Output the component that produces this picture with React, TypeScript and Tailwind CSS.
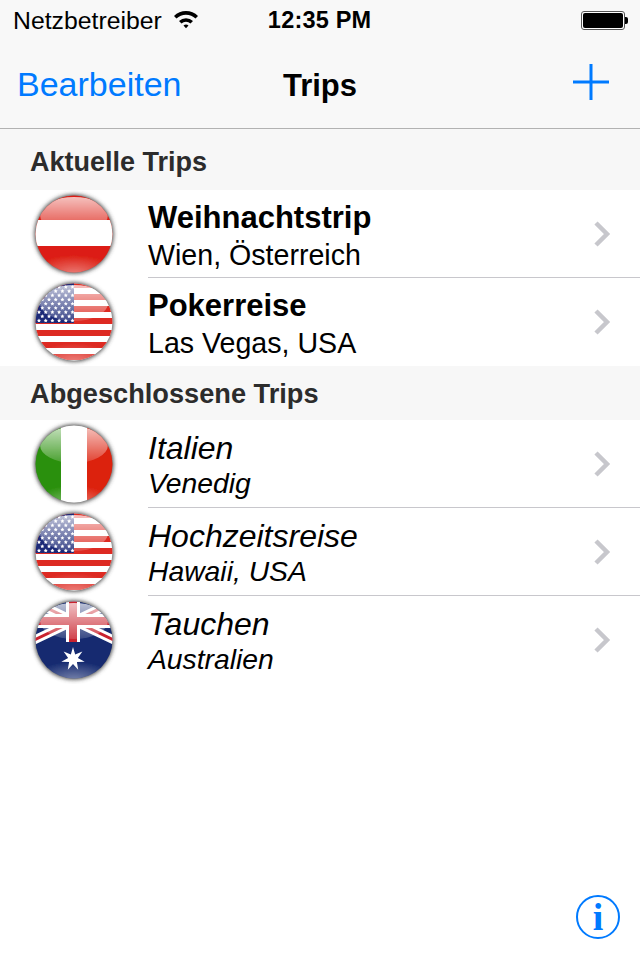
import React from "react";

const STAR = "M0,-1 L.29,-.4 L.95,-.31 L.47,.15 L.59,.81 L0,.5 L-.59,.81 L-.47,.15 L-.95,-.31 L-.29,-.4 Z";

function sevenStar(cx: number, cy: number, R: number, r: number) {
  const pts: string[] = [];
  for (let i = 0; i < 14; i++) {
    const a = (Math.PI * i) / 7 - Math.PI / 2;
    const rad = i % 2 ? r : R;
    pts.push(`${(cx + rad * Math.cos(a)).toFixed(2)},${(cy + rad * Math.sin(a)).toFixed(2)}`);
  }
  return pts.join(" ");
}

function Art({ kind }: { kind: string }) {
  if (kind === "at")
    return (
      <>
        <rect x="0" y="0" width="88" height="88" fill="#dc1f14" />
        <rect x="0" y="30" width="88" height="26" fill="#ffffff" />
      </>
    );
  if (kind === "it")
    return (
      <>
        <rect x="0" y="0" width="31" height="88" fill="#2a900c" />
        <rect x="31" y="0" width="26" height="88" fill="#ffffff" />
        <rect x="57" y="0" width="31" height="88" fill="#dc200c" />
      </>
    );
  if (kind === "us") {
    const stripes = [4, 16, 28, 40, 52, 64, 76];
    const stars: [number, number][] = [];
    for (let r = 0; r < 5; r++)
      for (let c = 0; c < 6; c++) stars.push([9 + c * 6.7, 9 + r * 8.4]);
    for (let r = 0; r < 4; r++)
      for (let c = 0; c < 5; c++) stars.push([12.3 + c * 6.7, 13.2 + r * 8.4]);
    return (
      <>
        <rect x="0" y="0" width="88" height="88" fill="#ffffff" />
        {stripes.map((y) => (
          <rect key={y} x="0" y={y} width="88" height="6" fill="#dd2a22" />
        ))}
        <rect x="0" y="0" width="44" height="45" fill="#1d2a78" />
        {stars.map(([x, y], i) => (
          <path key={i} d={STAR} transform={`translate(${x},${y}) scale(2.1)`} fill="#ffffff" />
        ))}
      </>
    );
  }
  return (
    <>
      <rect x="0" y="0" width="88" height="88" fill="#14296f" />
      <path d="M0,4 L88,46 M88,4 L0,46" stroke="#ffffff" strokeWidth="9" />
      <path d="M0,4 L88,46 M88,4 L0,46" stroke="#c9232e" strokeWidth="3" />
      <rect x="0" y="18" width="88" height="14" fill="#ffffff" />
      <rect x="36" y="0" width="14" height="46" fill="#ffffff" />
      <rect x="0" y="21" width="88" height="8" fill="#c9232e" />
      <rect x="39" y="0" width="8" height="46" fill="#c9232e" />
      <polygon points={sevenStar(43, 63, 12, 5)} fill="#ffffff" />
    </>
  );
}

function Flag({ kind, id }: { kind: string; id: string }) {
  return (
    <svg width="88" height="88" viewBox="0 0 88 88" className="block shrink-0">
      <defs>
        <clipPath id={`c-${id}`}>
          <circle cx="44" cy="44" r="38.5" />
        </clipPath>
        <linearGradient id={`g-${id}`} x1="0" y1="0" x2="0" y2="1">
          <stop offset="0" stopColor="#fff" stopOpacity="0.72" />
          <stop offset="1" stopColor="#fff" stopOpacity="0.15" />
        </linearGradient>
        <radialGradient id={`b-${id}`} cx="0.5" cy="1" r="0.55">
          <stop offset="0" stopColor="#fff" stopOpacity="0.42" />
          <stop offset="1" stopColor="#fff" stopOpacity="0" />
        </radialGradient>
        <filter id={`s-${id}`} x="-20%" y="-20%" width="140%" height="140%">
          <feGaussianBlur stdDeviation="2.1" />
        </filter>
        <filter id={`f-${id}`} x="-5%" y="-5%" width="110%" height="110%">
          <feGaussianBlur stdDeviation="0.45" />
        </filter>
      </defs>
      <circle cx="44" cy="44" r="39.5" fill="#444" filter={`url(#s-${id})`} />
      <g filter={`url(#f-${id})`}>
        <g clipPath={`url(#c-${id})`}>
          <Art kind={kind} />
          <rect x="5" y="50" width="78" height="34" fill={`url(#b-${id})`} />
          <ellipse cx="44" cy="25" rx="34" ry="18" fill={`url(#g-${id})`} />
        </g>
      </g>
    </svg>
  );
}

function Chevron() {
  return (
    <svg width="18" height="28" viewBox="0 0 18 28" className="shrink-0">
      <path d="M3 3 L14 14 L3 25" fill="none" stroke="#c7c7cc" strokeWidth="4.5" />
    </svg>
  );
}

function Row({
  kind,
  id,
  title,
  sub,
  done,
  last,
}: {
  kind: string;
  id: string;
  title: string;
  sub: string;
  done?: boolean;
  last?: boolean;
}) {
  return (
    <div className="flex h-[88px] bg-white">
      <div className="w-[148px] shrink-0 pl-[30px] flex items-center">
        <Flag kind={kind} id={id} />
      </div>
      <div
        className={`flex-1 flex items-center justify-between pr-[29px] ${
          last ? "" : "border-b border-[#c8c7cc]"
        }`}
      >
        {done ? (
          <div className="italic text-black pt-[1px]">
            <div className="text-[32px] leading-[37px]">{title}</div>
            <div className="text-[28.3px] leading-[32px]">{sub}</div>
          </div>
        ) : (
          <div className="text-black pt-[4px]">
            <div className="text-[31px] leading-[38px] font-bold">{title}</div>
            <div className="text-[28.6px] leading-[36px]">{sub}</div>
          </div>
        )}
        <Chevron />
      </div>
    </div>
  );
}

export default function App() {
  return (
    <div className="w-[640px] h-[960px] flex flex-col bg-white font-['Liberation_Sans',Arial,sans-serif] overflow-hidden">
      <header className="h-[129px] shrink-0 bg-[#f8f8f8] border-b border-[#b2b2b2] flex flex-col">
        <div className="h-[41px] flex items-center relative text-black">
          <span className="ml-[13px] text-[24.8px] leading-none pt-[1px]">Netzbetreiber</span>
          <svg width="26" height="20" viewBox="0 0 26 20" className="ml-[11px] mb-[4px]">
            <path
              d="M1 7 A17 17 0 0 1 25 7 L22.5 9.6 A13.5 13.5 0 0 0 3.5 9.6 Z M6 12 A10 10 0 0 1 20 12 L17.5 14.5 A6.5 6.5 0 0 0 8.5 14.5 Z M10.5 16.6 A4 4 0 0 1 15.5 16.6 L13 19.2 Z"
              fill="#000"
            />
          </svg>
          <span className="ml-[69px] text-[23.5px] leading-none font-bold tracking-[0.2px] pt-[1px]">12:35 PM</span>
          <div className="ml-auto mr-[12px] flex items-center">
            <div className="w-[44px] h-[19px] rounded-[3px] border border-[#555] p-[1px] bg-white">
              <div className="w-full h-full rounded-[2px] bg-black" />
            </div>
            <div className="w-[3px] h-[7px] rounded-r-[2px] bg-black" />
          </div>
        </div>
        <div className="flex-1 grid grid-cols-[1fr_auto_1fr] items-center">
          <div className="pl-[17px] pt-[1px]">
            <span className="text-[34px] leading-none text-[#007aff]">Bearbeiten</span>
          </div>
          <span className="text-[31px] leading-none font-bold text-black pt-[1px]">Trips</span>
          <div className="flex justify-end pr-[31px] pb-[6px]">
            <svg width="36" height="36" viewBox="0 0 36 36">
              <path d="M0 18 H36 M18 0 V36" stroke="#007aff" strokeWidth="3" />
            </svg>
          </div>
        </div>
      </header>

      <div className="h-[61px] shrink-0 bg-[#f7f7f7] pl-[30px] pt-[5px] flex items-center">
        <span className="text-[27px] leading-none font-bold text-[#2c2c2c]">Aktuelle Trips</span>
      </div>
      <Row kind="at" id="a" title="Weihnachtstrip" sub="Wien, Österreich" />
      <Row kind="us" id="b" title="Pokerreise" sub="Las Vegas, USA" last />

      <div className="h-[54px] shrink-0 bg-[#f7f7f7] pl-[30px] pt-[1px] flex items-center">
        <span className="text-[27.2px] leading-none font-bold text-[#2c2c2c]">Abgeschlossene Trips</span>
      </div>
      <Row kind="it" id="c" title="Italien" sub="Venedig" done />
      <Row kind="us" id="d" title="Hochzeitsreise" sub="Hawaii, USA" done />
      <Row kind="au" id="e" title="Tauchen" sub="Australien" done last />

      <div className="mt-auto flex justify-end pr-[20px] pb-[21px]">
        <div className="w-[44px] h-[44px] rounded-full border-[2.5px] border-[#007aff] flex items-center justify-center">
          <span className="font-['Liberation_Serif',serif] font-bold text-[38px] leading-none text-[#007aff]">i</span>
        </div>
      </div>
    </div>
  );
}
